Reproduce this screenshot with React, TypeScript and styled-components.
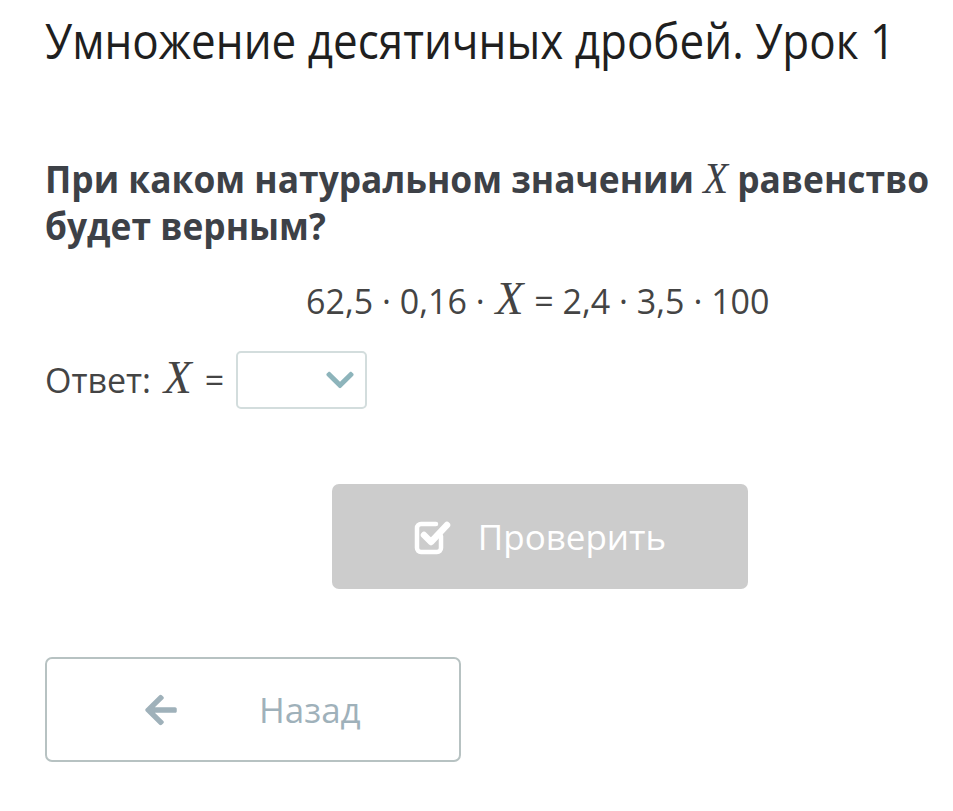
import React from "react";
import styled, { createGlobalStyle } from "styled-components";
import { FaArrowLeft, FaChevronDown } from "react-icons/fa";

const Global = createGlobalStyle`
  html, body { margin: 0; padding: 0; background: #fff; }
  body { font-family: "Open Sans", "Liberation Sans", sans-serif; }
`;

const Page = styled.div`
  padding: 10px 0 0 45px;
  display: flex;
  flex-direction: column;
  overflow: hidden;
`;

/* Emulates Open Sans SemiCondensed, which is not installed */
const Title = styled.h1`
  margin: 0;
  font-size: 50px;
  font-weight: 400;
  color: #1f1f1f;
  line-height: 60px;
  white-space: nowrap;
  width: max-content;
  transform: scaleX(0.88);
  transform-origin: left center;
`;

const Question = styled.h2`
  margin: 85px 0 0;
  font-size: 38px;
  font-weight: 700;
  color: #3d4147;
  line-height: 47px;
  width: 1020px;
  flex-shrink: 0;
  transform: scaleX(0.93);
  transform-origin: left center;
`;

const MathX = styled.span<{ $scale?: number; $gap?: number }>`
  font-family: "Liberation Serif", "DejaVu Serif", serif;
  font-style: italic;
  font-weight: 400;
  font-size: ${(p) => p.$scale ?? 1.12}em;
  line-height: 0;
  margin: 0 ${(p) => p.$gap ?? 0}px;
`;

const Equation = styled.div`
  margin-top: 32px;
  font-size: 34px;
  line-height: 40px;
  color: #444;
  padding-left: 261px;
  white-space: nowrap;
`;

const AnswerRow = styled.div`
  margin-top: 30px;
  display: flex;
  align-items: center;
  gap: 12px;
  font-size: 34px;
  color: #444;
`;

const Select = styled.div`
  width: 131px;
  height: 58px;
  box-sizing: border-box;
  border: 2px solid #d3dddd;
  border-radius: 5px;
  display: flex;
  align-items: center;
  justify-content: flex-end;
  padding-right: 9px;
  color: #8db4bb;
  font-size: 32px;
`;

const CheckButton = styled.div`
  margin: 75px 0 0 287px;
  width: 416px;
  height: 105px;
  background: #cccccc;
  border-radius: 7px;
  display: flex;
  align-items: center;
  justify-content: center;
  gap: 26px;
  color: #fff;
  font-size: 35px;
`;

const BackButton = styled.div`
  margin-top: 68px;
  width: 416px;
  height: 105px;
  box-sizing: border-box;
  border: 2px solid #b7c2c2;
  border-radius: 7px;
  display: flex;
  align-items: center;
  color: #9fb1ba;
  font-size: 35px;
  padding-left: 96px;
  gap: 80px;
`;

const CheckIcon = () => (
  <svg width="38" height="36" viewBox="0 0 38 36" fill="none">
    <path
      d="M27 17 V29 a4 4 0 0 1 -4 4 H7 a4 4 0 0 1 -4 -4 V9 a4 4 0 0 1 4 -4 H22"
      stroke="#fff"
      strokeWidth="4.5"
      strokeLinecap="round"
    />
    <path
      d="M10 16 L17 23 L33 6"
      stroke="#fff"
      strokeWidth="6.5"
      strokeLinecap="round"
      strokeLinejoin="round"
    />
  </svg>
);

export default function App() {
  return (
    <>
      <Global />
      <Page>
        <Title>Умножение десятичных дробей. Урок 1</Title>
        <Question>
          При каком натуральном значении <MathX $scale={1.15}>X</MathX> равенство будет верным?
        </Question>
        <Equation>
          62,5 · 0,16 · <MathX $scale={1.35} $gap={2}>X</MathX> = 2,4 · 3,5 · 100
        </Equation>
        <AnswerRow>
          <span>
            Ответ: <MathX $scale={1.35} $gap={4}>X</MathX> =
          </span>
          <Select>
            <FaChevronDown />
          </Select>
        </AnswerRow>
        <CheckButton>
          <CheckIcon />
          <span>Проверить</span>
        </CheckButton>
        <BackButton>
          <FaArrowLeft size={36} />
          <span>Назад</span>
        </BackButton>
      </Page>
    </>
  );
}
